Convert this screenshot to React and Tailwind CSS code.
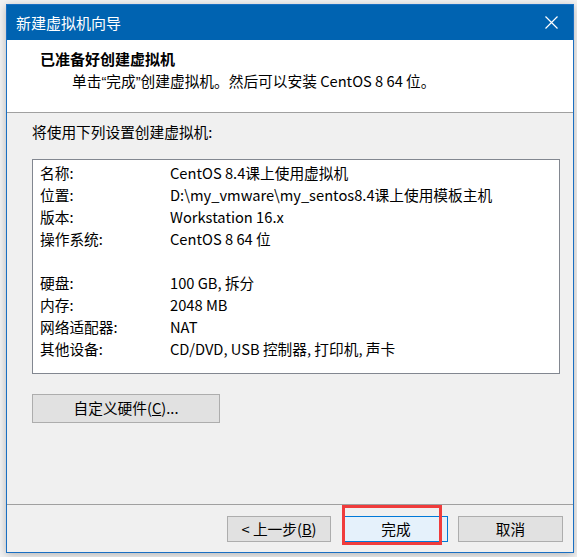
export default function App() {
  const font = { fontFamily: '"Noto Sans CJK SC", "Noto Sans", sans-serif' };
  const rows1 = [
    ["名称:", "CentOS 8.4课上使用虚拟机"],
    ["位置:", "D:\\my_vmware\\my_sentos8.4课上使用模板主机"],
    ["版本:", "Workstation 16.x"],
    ["操作系统:", "CentOS 8 64 位"],
  ];
  const rows2 = [
    ["硬盘:", "100 GB, 拆分"],
    ["内存:", "2048 MB"],
    ["网络适配器:", "NAT"],
    ["其他设备:", "CD/DVD, USB 控制器, 打印机, 声卡"],
  ];
  const Row = ({ l, v }) => (
    <div className="flex h-[22px] items-center">
      <div className="w-[130px] shrink-0">{l}</div>
      <div className="whitespace-nowrap">{v}</div>
    </div>
  );
  const Q = ({ c }) => <span className="font-['Liberation_Sans']">{c}</span>;
  return (
    <div className="w-[577px] h-[557px] bg-[#f2f2f2] overflow-hidden pt-[4px] pl-[6px] text-black" style={font}>
      <div className="relative w-[568px] h-[549px] border border-[#1a6fc2] bg-[#f0f0f0] flex flex-col shadow-[0_2px_8px_rgba(0,0,0,0.25)]">
        {/* title bar */}
        <div className="h-[35px] bg-[#0063b1] flex items-center justify-between pl-[9px] pr-[14px] shrink-0">
          <span className="text-white text-[15px] leading-none">新建虚拟机向导</span>
          <svg width="13" height="13" viewBox="0 0 13 13" className="mr-[1px]">
            <path d="M0.5 0.5 L12.5 12.5 M12.5 0.5 L0.5 12.5" stroke="white" strokeWidth="1.2" />
          </svg>
        </div>
        {/* header */}
        <div className="h-[73px] bg-white border-b border-[#a0a0a0] shrink-0 pl-[33px] pt-[8px]">
          <div className="text-[15px] font-bold leading-[22px]">已准备好创建虚拟机</div>
          <div className="text-[14.7px] leading-[22px] pl-[32px] whitespace-nowrap">
            单击<Q c="“" />完成<Q c="”" />创建虚拟机。然后可以安装 CentOS 8 64 位。
          </div>
        </div>
        {/* body */}
        <div className="flex-1 flex flex-col pl-[25px] pr-[13px] pt-[9px] text-[14.7px]">
          <div className="h-[20px] leading-[20px]">将使用下列设置创建虚拟机:</div>
          <div className="mt-[17px] w-[528px] h-[215px] bg-white border border-[#828790] pt-[2px] pl-[7px]">
            {rows1.map(([l, v]) => <Row key={l} l={l} v={v} />)}
            <div className="h-[22px]" />
            {rows2.map(([l, v]) => <Row key={l} l={l} v={v} />)}
          </div>
          <div className="mt-[20px]">
            <button className="w-[188px] h-[29px] bg-[#e1e1e1] border border-[#adadad] text-[14.7px] flex items-center justify-center">
              自定义硬件(<span className="underline">C</span>)...
            </button>
          </div>
        </div>
        <div className="h-px bg-[#a0a0a0] shrink-0" />
        <div className="h-[47px] shrink-0 flex items-start pt-[11px] pl-[220px] text-[14.7px]">
          <button className="w-[104px] h-[26px] bg-[#e1e1e1] border border-[#adadad] flex items-center justify-center whitespace-pre">
            {"< 上一步("}<span className="underline">B</span>)
          </button>
          <button className="ml-[13px] w-[104px] h-[26px] bg-[#e5f1fb] border border-[#0078d7] flex items-center justify-center">
            完成
          </button>
          <button className="ml-[10px] w-[105px] h-[26px] bg-[#e1e1e1] border border-[#adadad] flex items-center justify-center">
            取消
          </button>
        </div>
        {/* red highlight overlay */}
        <div className="absolute left-[335px] top-[500px] w-[100px] h-[40px] border-[3px] border-[#f03c3c] pointer-events-none" />
      </div>
    </div>
  );
}
